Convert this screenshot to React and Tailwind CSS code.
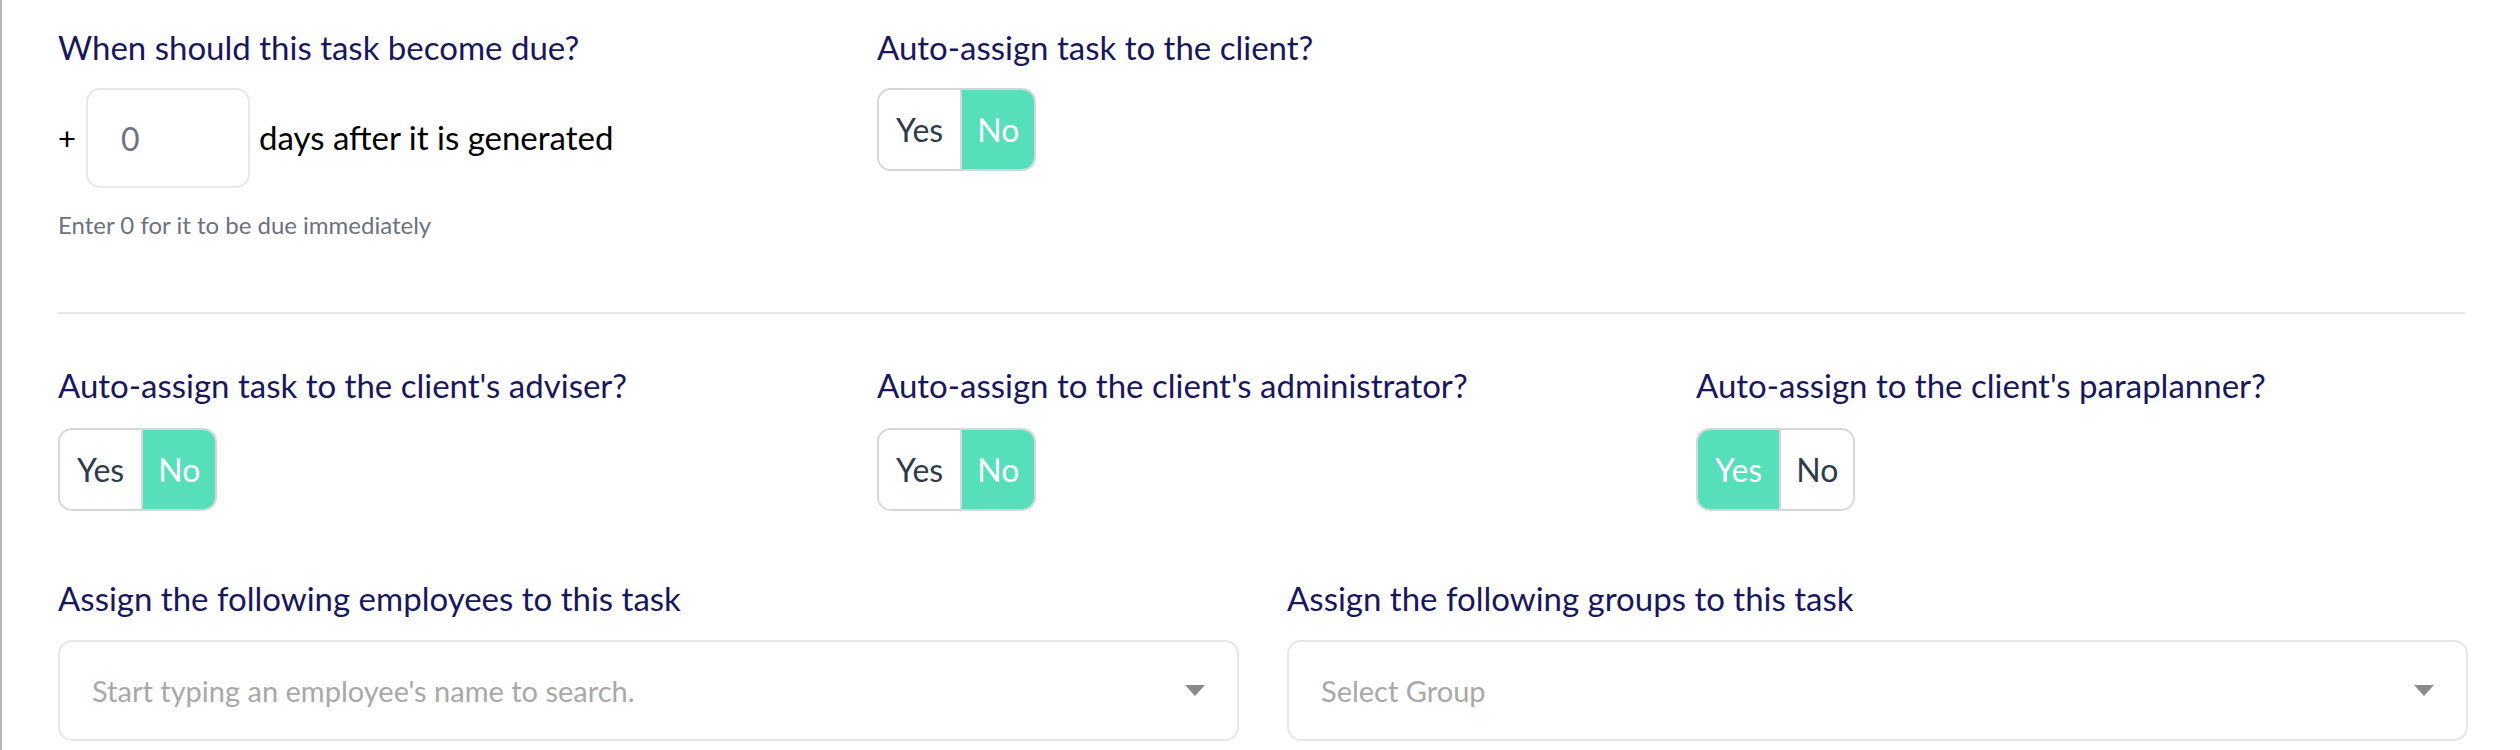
import React, { useState } from "react";

const font = { fontFamily: "Lato, 'Open Sans', sans-serif" };

const Toggle = ({ value, onChange }) => (
  <div className="flex h-[83px] w-fit overflow-hidden rounded-[14px] border-2 border-[#d4d6dc] bg-white">
    <button
      onClick={() => onChange(true)}
      className={`flex items-center px-[17px] text-[32px] border-r-2 border-[#d4d6dc] ${
        value ? "bg-[#56dfba] text-white" : "bg-white text-[#2f3a4b]"
      }`}>
      Yes
    </button>
    <button
      onClick={() => onChange(false)}
      className={`flex items-center px-[15px] text-[32px] ${
        !value ? "bg-[#56dfba] text-white" : "bg-white text-[#2f3a4b]"
      }`}>
      No
    </button>
  </div>
);

const Label = ({ children }) => (
  <h3 className="text-[33px] leading-[40px] text-[#19175c]">{children}</h3>
);

const Select = ({ placeholder }) => (
  <div className="flex h-[101px] items-center justify-between rounded-[14px] border-2 border-[#e6e7eb] bg-white pl-[32px] pr-[32px]">
    <span className="text-[29px] text-[#a8a8a8]">{placeholder}</span>
    <svg width="20" height="11" viewBox="0 0 20 11">
      <path d="M0 0h20L10 11z" fill="#8a8a8a" />
    </svg>
  </div>
);

export default function App() {
  const [days, setDays] = useState("");
  const [client, setClient] = useState(false);
  const [adviser, setAdviser] = useState(false);
  const [admin, setAdmin] = useState(false);
  const [para, setPara] = useState(true);

  return (
    <div
      style={font}
      className="min-h-[750px] w-full border-l-2 border-[#b8b8b8] bg-white pl-[56px] pr-[52px] pt-[27px]">
      <div className="grid grid-cols-3 gap-x-[47px]">
        <div>
          <Label>When should this task become due?</Label>
          <div className="mt-[21px] flex items-center">
            <span className="mr-[10px] text-[31px] text-black">+</span>
            <input
              value={days}
              onChange={(e) => setDays(e.target.value)}
              placeholder="0"
              className="h-[100px] w-[164px] rounded-[14px] border-2 border-[#e6e7eb] px-[33px] text-[32px] text-[#374151] outline-none placeholder:text-[#6b7280]"
            />
            <span className="ml-[9px] text-[33px] text-black">
              days after it is generated
            </span>
          </div>
          <p className="mt-[19px] text-[24px] text-[#6b7280]">
            Enter 0 for it to be due immediately
          </p>
        </div>
        <div>
          <Label>Auto-assign task to the client?</Label>
          <div className="mt-[21px]">
            <Toggle value={client} onChange={setClient} />
          </div>
        </div>
        <div />
      </div>

      <hr className="mt-[69px] mr-[3px] border-t-2 border-[#e6e7eb]" />

      <div className="mt-[51px] grid grid-cols-3 gap-x-[47px]">
        <div>
          <Label>Auto-assign task to the client's adviser?</Label>
          <div className="mt-[23px]">
            <Toggle value={adviser} onChange={setAdviser} />
          </div>
        </div>
        <div>
          <Label>Auto-assign to the client's administrator?</Label>
          <div className="mt-[23px]">
            <Toggle value={admin} onChange={setAdmin} />
          </div>
        </div>
        <div>
          <Label>Auto-assign to the client's paraplanner?</Label>
          <div className="mt-[23px]">
            <Toggle value={para} onChange={setPara} />
          </div>
        </div>
      </div>

      <div className="mt-[67px] grid grid-cols-2 gap-x-[48px]">
        <div>
          <Label>Assign the following employees to this task</Label>
          <div className="mt-[22px]">
            <Select placeholder="Start typing an employee's name to search." />
          </div>
        </div>
        <div>
          <Label>Assign the following groups to this task</Label>
          <div className="mt-[22px]">
            <Select placeholder="Select Group" />
          </div>
        </div>
      </div>
    </div>
  );
}
